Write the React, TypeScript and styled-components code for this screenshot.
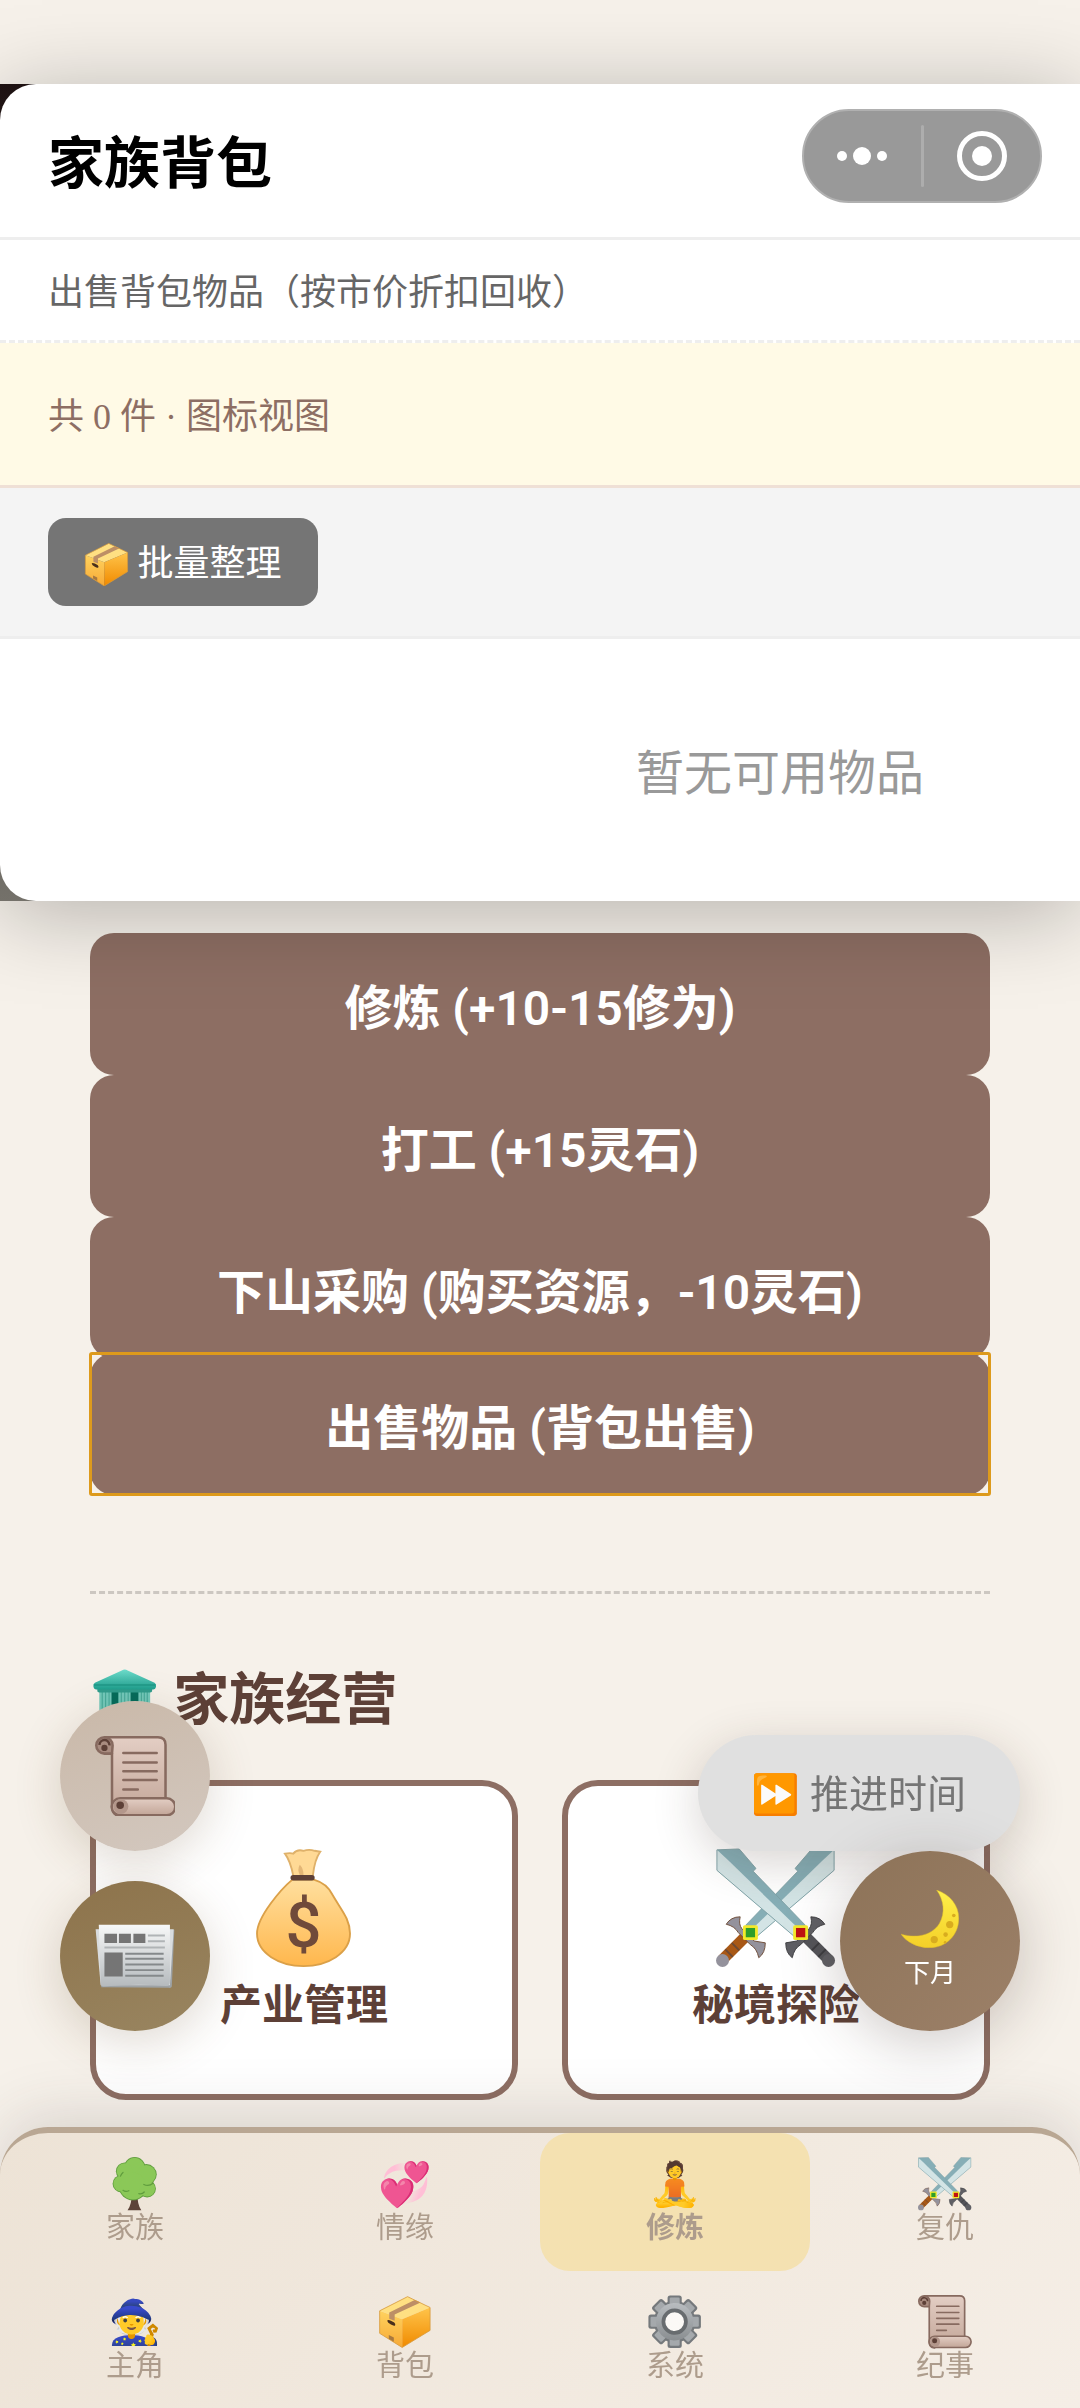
import React, { FC, ReactNode } from "react";
import styled, { createGlobalStyle } from "styled-components";

const GlobalStyle = createGlobalStyle`
  * {
    box-sizing: border-box;
  }
  body {
    margin: 0;
    background: #f6f1ea;
    color: #5d4037;
    font-family: Roboto, "Noto Sans CJK SC", "Noto Color Emoji", sans-serif;
  }
  button {
    border: none;
    font-family: inherit;
    cursor: pointer;
  }
  h2, p {
    margin: 0;
  }
`;

const Page = styled.div`
  position: relative;
  min-height: 100vh;
  padding: 84px 0 308px;
  overflow-x: hidden;
`;

/* icons */
const Glyph = styled.svg`
  width: 1.24em;
  height: 1.24em;
  vertical-align: -0.29em;
`;
const HiddenDefs = styled.svg`
  position: absolute;
  width: 0;
  height: 0;
`;

const gradients = [
  { id: "paper", from: "#e3cec4", to: "#c2a597" },
  { id: "news", from: "#f7f8f8", to: "#b5babd" },
  { id: "bag", from: "#ffdf9e", to: "#ffb74d" },
  { id: "boxLeft", from: "#ffd25e", to: "#f7a936" },
  { id: "boxRight", from: "#ffc44a", to: "#f08a00" },
  { id: "roof", from: "#6fdccb", to: "#1e9f8e" },
  { id: "leaf", from: "#a3d36c", to: "#7cba48" },
  { id: "moon", from: "#fff04a", to: "#f4cf28" },
  { id: "metal", from: "#b9bdc0", to: "#8a8e91" },
];

const IconDefs: FC = () => (
  <HiddenDefs aria-hidden="true">
    <defs>
      {gradients.map(({ id, from, to }) => (
        <linearGradient key={id} id={id} x1="0" y1="0" x2="0" y2="1">
          <stop offset="0" stopColor={from} />
          <stop offset="1" stopColor={to} />
        </linearGradient>
      ))}
    </defs>
  </HiddenDefs>
);

const BoxIcon: FC = () => (
  <Glyph viewBox="0 0 128 128">
    <path d="M71 4 125 30 58 58 4 38Z" fill="#ffe082" />
    <path d="M4 38 58 58V126L4 92Z" fill="url(#boxLeft)" />
    <path d="M58 58 125 30V85L58 126Z" fill="url(#boxRight)" />
    <path d="M88 12 102 18 40 47V62L27 57V42Z" fill="#bd8f66" />
    <path d="M71 4 125 30V85L58 126 4 92V38Z" fill="none" stroke="#d79a3c" strokeWidth="2" />
    <path d="M22 62q2-4 9 0l8 4q4 4 2 7-3 2-10-2-8-4-9-9Z" fill="#4a2f1c" />
    <path d="M26 96 38 102V112L26 105Z" fill="#a8783f" />
  </Glyph>
);

const BankIcon: FC = () => (
  <Glyph viewBox="-7 -7 142 142">
    <path d="M14 42H114V112H14Z" fill="#046b5b" />
    <path d="M12 40H37V112H12ZM51 40H76V112H51ZM92 40H116V112H92Z" fill="#72c9bb" />
    <path
      d="M18 46V112M25 46V112M32 46V112M57 46V112M64 46V112M71 46V112M98 46V112M104 46V112M110 46V112"
      stroke="#3fa595"
      strokeWidth="2"
    />
    <path d="M8 38H120V44Q120 47 116 47H12Q8 47 8 44Z" fill="#2f9c8c" />
    <path d="M58 2q6-4 12 0L125 27q4 2 3 8t-6 6H6q-5 0-6-6t3-8Z" fill="url(#roof)" />
    <path d="M1 32H127" stroke="#1f9787" strokeWidth="3" />
    <path d="M4 112H124V126H4Z" fill="#2ba796" />
  </Glyph>
);

const ScrollIcon: FC = () => (
  <Glyph viewBox="0 0 128 128">
    <g stroke="#876a5f" strokeWidth="4" strokeLinejoin="round">
      <path d="M16 2H100Q112 2 112 14V104H40V127Q27 126 27 112V28Z" fill="url(#paper)" />
      <path d="M27 28H15A13 13 0 1 1 28 15Z" fill="#a98c80" />
      <path d="M40 99H114A13 13 0 0 1 114 126H40A13 13 0 0 1 40 99Z" fill="url(#paper)" />
      <circle cx="41" cy="112" r="12" fill="#b3978b" stroke="none" />
    </g>
    <path d="M7 14a8 8 0 0 1 16 1" fill="none" stroke="#5d4037" strokeWidth="4" />
    <circle cx="15" cy="19" r="5" fill="#5d4037" />
    <circle cx="40" cy="110" r="6" fill="#5d4037" />
    <path
      d="M45 27H98M45 42H98M45 56H98M45 70H98M45 85H68"
      stroke="#876a5f"
      strokeWidth="4"
      strokeLinecap="round"
    />
  </Glyph>
);

const NewsIcon: FC = () => (
  <Glyph viewBox="0 0 128 128">
    <path d="M2 22H126L122 112Q121 115 117 114L10 113Z" fill="#9da2a5" />
    <path d="M1 21H125L119 110H9Z" fill="#d9dcde" />
    <path d="M6 14H119V104Q119 111 113 111 64 107 14 112 9 112 9 106Z" fill="url(#news)" />
    <path d="M15 28H35V43H15ZM38 28H57V43H38ZM61 28H80V43H61ZM15 58H44V96H15Z" fill="#757575" />
    <path d="M84 31H111M84 40H111M15 50H111" stroke="#b0b4b6" strokeWidth="3" />
    <path d="M48 60H109M48 68H109M48 77H109M48 86H109M48 95H109" stroke="#85898b" strokeWidth="3" />
  </Glyph>
);

const MoneyIcon: FC = () => (
  <Glyph viewBox="0 0 128 128">
    <path
      d="M44 6Q50 5 53 6 57 1 64 3 70 1 76 3L82 4Q76 12 74 30H53Q50 14 44 6Z"
      fill="#ffd995"
      stroke="#dfb16a"
      strokeWidth="2"
    />
    <path d="M60 29q-3-6 0-11 4 4 4 11" fill="#e3b676" />
    <path
      d="M52 34H75Q89 38 95 50C104 66 114 76 114 92 114 113 90 127 64 127S14 113 14 92C14 74 40 44 52 34Z"
      fill="url(#bag)"
      stroke="#dba048"
      strokeWidth="2"
    />
    <rect x="50" y="29" width="26" height="6" rx="3" fill="#5d4037" />
    <text
      x="64"
      y="106"
      fill="#704a3a"
      fontFamily="Roboto, sans-serif"
      fontSize="68"
      fontWeight="500"
      textAnchor="middle"
    >
      $
    </text>
  </Glyph>
);

// one sword, the other is its mirror image
const Sword: FC<{ guard: string; grip: string; gem: string; edge: string }> = ({
  guard,
  grip,
  gem,
  edge,
}) => (
  <>
    <path d="M1 2 25 1 43 22 40 25 96 83 84 95 1 24Z" fill="#86aeb6" />
    <path d="M1 2 14 14 90 88 84 95 1 24Z" fill="#d3e4e5" />
    <path d="M1 2 25 1 43 22 40 25 96 83 84 95 1 24Z" fill="none" stroke="#7fa1a6" strokeWidth="1" />
    <path d="M97 96 121 120" stroke={grip} strokeWidth="12" />
    <path d="M103 110 111 102M110 117 118 109" stroke={edge} strokeWidth="2" />
    <circle cx="121" cy="121" r="7" fill={guard} />
    <path
      d="M102 74Q112 74 117 82 108 84 104 91L91 104Q84 108 82 118 75 113 75 102L87 100 100 87Q104 82 102 74Z"
      fill={guard}
      stroke={edge}
      strokeWidth="1"
    />
    <rect x="83" y="83" width="16" height="16" rx="2" fill="#f4ea2a" />
    <rect x="86" y="86" width="10" height="10" fill={gem} />
  </>
);

const SwordsIcon: FC = () => (
  <Glyph viewBox="0 0 128 128">
    <g transform="translate(128 0) scale(-1 1)">
      <Sword guard="#94929c" grip="#a85816" gem="#2f9e2a" edge="#6d4a35" />
    </g>
    <Sword guard="#5f5f64" grip="#545459" gem="#c01212" edge="#3c3c40" />
  </Glyph>
);

const treeBlobs = [
  [64, 26, 25],
  [40, 34, 20],
  [92, 42, 24],
  [32, 64, 20],
  [60, 70, 33],
  [94, 76, 20],
];

const TreeIcon: FC = () => (
  <Glyph viewBox="0 0 128 128">
    <path d="M57 88H71Q70 114 80 128H47Q57 114 57 88Z" fill="#5d4339" />
    {treeBlobs.map(([x, y, r]) => (
      <circle key={`${x}-${y}`} cx={x} cy={y} r={r + 1} fill="#5f9c3d" />
    ))}
    {treeBlobs.map(([x, y, r]) => (
      <circle key={`${x}-${y}`} cx={x} cy={y} r={r - 1} fill="#8bc858" />
    ))}
    <path
      d="M30 46q2-6 6-9M86 66q12 6 22-3M36 80q6 5 14 1M74 88q8 2 13-4"
      fill="none"
      stroke="#5f9c3d"
      strokeWidth="3"
      strokeLinecap="round"
    />
  </Glyph>
);

const GearIcon: FC = () => (
  <Glyph viewBox="0 0 128 128">
    {[0, 45, 90, 135].map((a) => (
      <rect key={a} x="47" y="1" width="34" height="126" rx="6" fill="#75797c" transform={`rotate(${a} 64 64)`} />
    ))}
    <circle cx="64" cy="64" r="50" fill="#75797c" />
    {[0, 45, 90, 135].map((a) => (
      <rect key={a} x="52" y="6" width="24" height="116" rx="3" fill="#a5a9ac" transform={`rotate(${a} 64 64)`} />
    ))}
    <circle cx="64" cy="64" r="45" fill="url(#metal)" />
    <circle cx="64" cy="64" r="27" fill="#fbf9f6" stroke="#686c6f" strokeWidth="9" />
  </Glyph>
);

const MoonIcon: FC = () => (
  <Glyph viewBox="0 0 128 128">
    <path
      d="M78 0C108 10 127 34 127 62 127 100 98 127 62 127 36 127 12 114 0 97 40 108 70 96 84 74 98 50 94 22 78 0Z"
      fill="url(#moon)"
      stroke="#d9b52a"
      strokeWidth="1"
    />
    <g fill="#d8ac1f">
      <circle cx="107" cy="76" r="8" />
      <circle cx="73" cy="109" r="8" />
      <circle cx="98" cy="98" r="5" />
      <circle cx="116" cy="56" r="4" />
      <circle cx="97" cy="115" r="3" />
    </g>
  </Glyph>
);

/* bag modal */
const ModalMount = styled.div`
  position: relative;
  z-index: 10;
  background: linear-gradient(#1d1111, #74716a);
  box-shadow: 0 12px 84px rgba(0, 0, 0, 0.27);
`;
const Modal = styled.section`
  background: #fff;
  border-radius: 36px 0 0 36px;
  overflow: hidden;
`;
const ModalHeader = styled.header`
  display: flex;
  align-items: center;
  justify-content: space-between;
  height: 156px;
  padding: 0 38px 0 48px;
  border-bottom: 3px solid #eee;
`;
const ModalTitle = styled.h2`
  padding-top: 6px;
  color: #000;
  font-size: 56px;
  line-height: 80px;
`;
const Capsule = styled.div`
  display: flex;
  align-items: center;
  width: 240px;
  height: 94px;
  margin-bottom: 10px;
  border: 2px solid #b0b0b0;
  border-radius: 47px;
  background: #999;
`;
const CapsuleButton = styled.button`
  flex: 1;
  display: flex;
  align-items: center;
  justify-content: center;
  height: 100%;
  padding: 0;
  background: none;
`;
const CapsuleLine = styled.span`
  width: 3px;
  height: 62px;
  border-radius: 2px;
  background: #adadad;
`;
const ModalDesc = styled.p`
  height: 103px;
  padding: 0 48px;
  border-bottom: 3px dashed #eee;
  color: #666;
  font-size: 36px;
  line-height: 106px;
`;
const Summary = styled.p`
  height: 145px;
  padding: 0 48px;
  border-bottom: 3px solid #efe0d6;
  background: #fffae6;
  color: #8d6e63;
  font-family: "Liberation Serif", "Noto Sans CJK SC", serif;
  font-size: 36px;
  line-height: 148px;
`;
const Toolbar = styled.div`
  padding: 30px 48px;
  border-bottom: 3px solid #eee;
  background: #f4f4f4;
`;
const BatchButton = styled.button`
  display: block;
  height: 88px;
  padding: 4px 36px 0;
  border-radius: 18px;
  background: #757575;
  color: #fff;
  font-size: 36px;
  line-height: 84px;
`;
const Empty = styled.p`
  height: 262px;
  padding-left: 480px;
  color: #999;
  font-size: 48px;
  line-height: 270px;
  text-align: center;
`;

/* main page */
const Main = styled.main`
  padding: 32px 90px 0;
`;
const Actions = styled.div`
  display: flex;
  flex-direction: column;
`;
const ActionButton = styled.button<{ $focused?: boolean }>`
  position: relative;
  height: 142px;
  border-radius: 24px;
  background: #8d6e63;
  color: #fff;
  font-size: 48px;
  font-weight: 600;
  transform: ${({ $focused }) => ($focused ? "translateY(-6px)" : "none")};

  &::after {
    content: "";
    display: ${({ $focused }) => ($focused ? "block" : "none")};
    position: absolute;
    inset: -1px;
    border: 3px solid #dd9a1c;
    border-radius: 3px;
  }
`;
const Divider = styled.hr`
  margin: 90px 0 60px;
  border: none;
  border-top: 3px dashed #ccc7c1;
`;
const SectionTitle = styled.h2`
  padding-top: 4px;
  font-size: 56px;
  line-height: 84px;
`;
const Cards = styled.div`
  display: grid;
  grid-template-columns: 1fr 1fr;
  gap: 44px;
  margin-top: 38px;
`;
const Card = styled.button`
  display: flex;
  flex-direction: column;
  align-items: center;
  height: 320px;
  padding: 54px 0 0;
  border: 6px solid #8d6e63;
  border-radius: 36px;
  background: #fff;
  color: #5d4037;
`;
const CardIcon = styled.span`
  display: flex;
  align-items: center;
  height: 136px;
  font-size: 96px;
`;
const CardLabel = styled.span`
  font-size: 42px;
  font-weight: 700;
  line-height: 60px;
`;

/* floating buttons */
const FloatLeft = styled.div`
  position: fixed;
  left: 60px;
  bottom: 377px;
  z-index: 5;
  display: flex;
  flex-direction: column;
  gap: 30px;
`;
const FloatRight = styled.div`
  position: fixed;
  right: 60px;
  bottom: 377px;
  z-index: 5;
  display: flex;
  flex-direction: column;
  align-items: flex-end;
`;
const RoundButton = styled.button<{ $from: string; $to: string }>`
  display: flex;
  align-items: center;
  justify-content: center;
  width: 150px;
  height: 150px;
  padding: 0;
  border-radius: 50%;
  background: linear-gradient(160deg, ${({ $from }) => $from}, ${({ $to }) => $to});
  box-shadow: 0 12px 48px rgba(93, 64, 30, 0.2);
  font-size: 65px;
`;
const AdvanceButton = styled.button`
  height: 116px;
  padding: 4px 54px 0;
  border-radius: 58px;
  background: #e0e0e0;
  box-shadow: 0 12px 48px rgba(60, 40, 30, 0.2);
  color: #757575;
  font-size: 39px;
  line-height: 112px;
`;
const MonthButton = styled.button`
  display: flex;
  flex-direction: column;
  align-items: center;
  justify-content: center;
  width: 180px;
  height: 180px;
  padding: 0;
  border-radius: 50%;
  background: linear-gradient(135deg, #8d7358, #9c8068);
  box-shadow: 0 12px 60px rgba(60, 40, 30, 0.25);
  color: #fff;
`;
const MonthIcon = styled.span`
  display: flex;
  align-items: center;
  height: 64px;
  font-size: 47px;
`;
const MonthLabel = styled.span`
  font-size: 26px;
  line-height: 44px;
`;

/* bottom navigation */
const Nav = styled.nav`
  position: fixed;
  left: 0;
  right: 0;
  bottom: 0;
  z-index: 6;
  display: grid;
  grid-template-columns: repeat(4, 1fr);
  grid-auto-rows: 138px;
  height: 281px;
  border-top: 6px solid #b9a793;
  border-radius: 48px 48px 0 0;
  background: linear-gradient(135deg, #ede3d6, #f5eee6);
  box-shadow: 0 -12px 60px rgba(60, 50, 50, 0.15);
`;
const NavItem = styled.button<{ $active?: boolean }>`
  display: flex;
  flex-direction: column;
  align-items: center;
  padding: 26px 0 0;
  border-radius: 30px;
  background: ${({ $active }) => ($active ? "#f4e1b1" : "none")};
  color: #ad9c8c;
  font-weight: ${({ $active }) => ($active ? 700 : 400)};
`;
const NavIcon = styled.span`
  display: flex;
  align-items: center;
  height: 50px;
  font-size: 43px;
`;
const NavLabel = styled.span`
  font-size: 29px;
  line-height: 38px;
`;

const actions = [
  "修炼 (+10-15修为)",
  "打工 (+15灵石)",
  "下山采购 (购买资源，-10灵石)",
  "出售物品 (背包出售)",
];

interface Item {
  icon: ReactNode;
  label: string;
}

const cards: Item[] = [
  { icon: <MoneyIcon />, label: "产业管理" },
  { icon: <SwordsIcon />, label: "秘境探险" },
];

const tabs: Item[] = [
  { icon: <TreeIcon />, label: "家族" },
  { icon: "💞", label: "情缘" },
  { icon: "🧘", label: "修炼" },
  { icon: <SwordsIcon />, label: "复仇" },
  { icon: "🧙", label: "主角" },
  { icon: <BoxIcon />, label: "背包" },
  { icon: <GearIcon />, label: "系统" },
  { icon: <ScrollIcon />, label: "纪事" },
];

const BagModal: FC = () => (
  <ModalMount>
    <Modal>
      <ModalHeader>
        <ModalTitle>家族背包</ModalTitle>
        <Capsule>
          <CapsuleButton aria-label="更多">
            <svg width="52" height="20" viewBox="0 0 52 20" fill="#fff">
              <circle cx="6" cy="10" r="5" />
              <circle cx="26" cy="10" r="9" />
              <circle cx="46" cy="10" r="5" />
            </svg>
          </CapsuleButton>
          <CapsuleLine />
          <CapsuleButton aria-label="关闭">
            <svg width="50" height="50" viewBox="0 0 50 50">
              <circle cx="25" cy="25" r="22.5" fill="none" stroke="#fff" strokeWidth="5" />
              <circle cx="25" cy="25" r="10" fill="#fff" />
            </svg>
          </CapsuleButton>
        </Capsule>
      </ModalHeader>
      <ModalDesc>出售背包物品（按市价折扣回收）</ModalDesc>
      <Summary>共 0 件 · 图标视图</Summary>
      <Toolbar>
        <BatchButton>
          <BoxIcon /> 批量整理
        </BatchButton>
      </Toolbar>
      <Empty>暂无可用物品</Empty>
    </Modal>
  </ModalMount>
);

const App: FC = () => {
  return (
    <>
      <GlobalStyle />
      <IconDefs />
      <Page>
        <BagModal />
        <Main>
          <Actions>
            {actions.map((text, i) => (
              <ActionButton key={text} $focused={i === 3}>
                {text}
              </ActionButton>
            ))}
          </Actions>
          <Divider />
          <SectionTitle>
            <BankIcon /> 家族经营
          </SectionTitle>
          <Cards>
            {cards.map(({ icon, label }) => (
              <Card key={label}>
                <CardIcon>{icon}</CardIcon>
                <CardLabel>{label}</CardLabel>
              </Card>
            ))}
          </Cards>
        </Main>
        <FloatLeft>
          <RoundButton $from="#c9b8a8" $to="#d3c8bf" aria-label="纪事">
            <ScrollIcon />
          </RoundButton>
          <RoundButton $from="#8d734b" $to="#998560" aria-label="新闻">
            <NewsIcon />
          </RoundButton>
        </FloatLeft>
        <FloatRight>
          <AdvanceButton>⏩ 推进时间</AdvanceButton>
          <MonthButton>
            <MonthIcon>
              <MoonIcon />
            </MonthIcon>
            <MonthLabel>下月</MonthLabel>
          </MonthButton>
        </FloatRight>
        <Nav>
          {tabs.map(({ icon, label }) => (
            <NavItem key={label} $active={label === "修炼"}>
              <NavIcon>{icon}</NavIcon>
              <NavLabel>{label}</NavLabel>
            </NavItem>
          ))}
        </Nav>
      </Page>
    </>
  );
};

export default App;
